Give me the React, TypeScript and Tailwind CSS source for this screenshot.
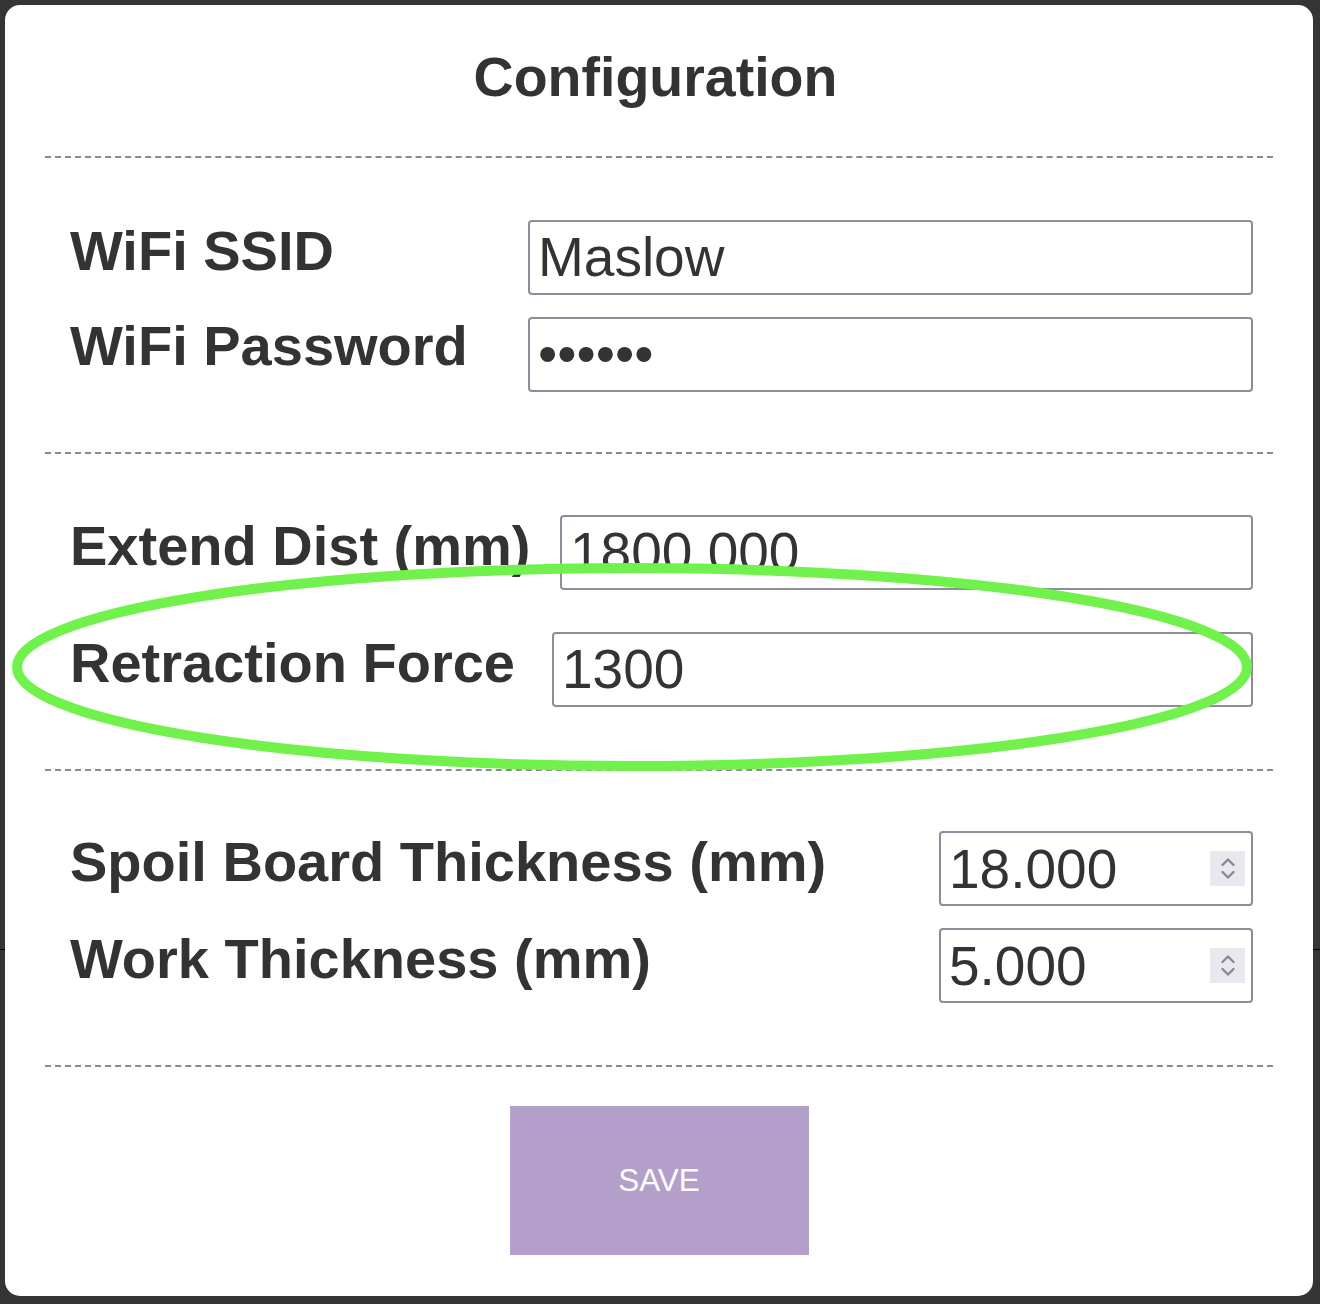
import React from "react";

const Dash = () => <div className="h-0 border-t-2 border-dashed border-[#8a8a8a]" />;

function Field({ value, type = "text" }: { value: string; type?: string }) {
  return (
    <input
      type={type}
      readOnly
      value={value}
      className="h-[75px] w-full flex-1 rounded-[4px] border-2 border-[#8f8b98] bg-white px-[8px] text-[55px] text-[#333] outline-none"
    />
  );
}

function Spinner() {
  return (
    <div className="mr-[6px] flex h-[35px] w-[35px] shrink-0 flex-col items-center justify-center gap-[3px] bg-[#e9e8ee]">
      <svg width="16" height="10" viewBox="0 0 16 10" fill="none">
        <path d="M2.5 8 L8 2.5 L13.5 8" stroke="#8a8891" strokeWidth="2.4" strokeLinecap="round" strokeLinejoin="round" />
      </svg>
      <svg width="16" height="10" viewBox="0 0 16 10" fill="none">
        <path d="M2.5 2 L8 7.5 L13.5 2" stroke="#8a8891" strokeWidth="2.4" strokeLinecap="round" strokeLinejoin="round" />
      </svg>
    </div>
  );
}

function NumField({ value }: { value: string }) {
  return (
    <div className="flex h-[75px] flex-1 items-center rounded-[4px] border-2 border-[#8f8b98] bg-white">
      <input
        type="text"
        readOnly
        value={value}
        className="h-full w-full min-w-0 flex-1 bg-transparent px-[8px] text-[55px] text-[#333] outline-none"
      />
      <Spinner />
    </div>
  );
}

const labelCls = "shrink-0 whitespace-nowrap text-[56px] font-bold leading-[62px]";

export default function App() {
  return (
    <div className="relative h-[1304px] w-[1320px] overflow-hidden bg-[#353535] font-['Liberation_Sans',Arial,sans-serif] text-[#333]">
      <div className="absolute left-0 top-[949px] h-px w-full bg-black" />
      <div className="relative ml-[5px] mt-[5px] flex h-[1291px] w-[1308px] flex-col rounded-[15px] bg-white px-[40px] pt-[41px]">
        <h1 className="pr-[7px] text-center text-[55.5px] font-bold leading-[62px]">Configuration</h1>
        <div className="mt-[48px]">
          <Dash />
        </div>

        <div className="mt-[62px] flex flex-col gap-[22px] pl-[25px] pr-[20px]">
          <div className="flex items-start">
            <div className={`w-[458px] ${labelCls}`}>WiFi SSID</div>
            <Field value="Maslow" />
          </div>
          <div className="flex items-start">
            <div className={`-mt-[2px] w-[458px] ${labelCls}`}>WiFi Password</div>
            <Field value="123456" type="password" />
          </div>
        </div>
        <div className="mt-[60px]">
          <Dash />
        </div>

        <div className="mt-[61px] flex flex-col gap-[42px] pl-[25px] pr-[20px]">
          <div className="flex items-start">
            <div className={`w-[490px] ${labelCls}`}>Extend Dist (mm)</div>
            <Field value="1800.000" />
          </div>
          <div className="flex items-start">
            <div className={`w-[482px] ${labelCls}`}>Retraction Force</div>
            <Field value="1300" />
          </div>
        </div>
        <div className="mt-[62px]">
          <Dash />
        </div>

        <div className="mt-[60px] flex flex-col gap-[22px] pl-[25px] pr-[20px]">
          <div className="flex items-start">
            <div className={`w-[869px] ${labelCls}`}>Spoil Board Thickness (mm)</div>
            <NumField value="18.000" />
          </div>
          <div className="flex items-start">
            <div className={`w-[869px] ${labelCls}`}>Work Thickness (mm)</div>
            <NumField value="5.000" />
          </div>
        </div>
        <div className="mt-[62px]">
          <Dash />
        </div>

        <div className="mt-[39px] flex justify-center">
          <button className="flex h-[149px] w-[299px] items-center justify-center bg-[#b39fc9] text-[31.5px] text-white">
            SAVE
          </button>
        </div>
      </div>

      <svg className="pointer-events-none absolute left-0 top-0" width="1320" height="1304" viewBox="0 0 1320 1304">
        <ellipse cx="632" cy="667" rx="615" ry="99" fill="none" stroke="#70f14c" strokeWidth="10" />
      </svg>
    </div>
  );
}
